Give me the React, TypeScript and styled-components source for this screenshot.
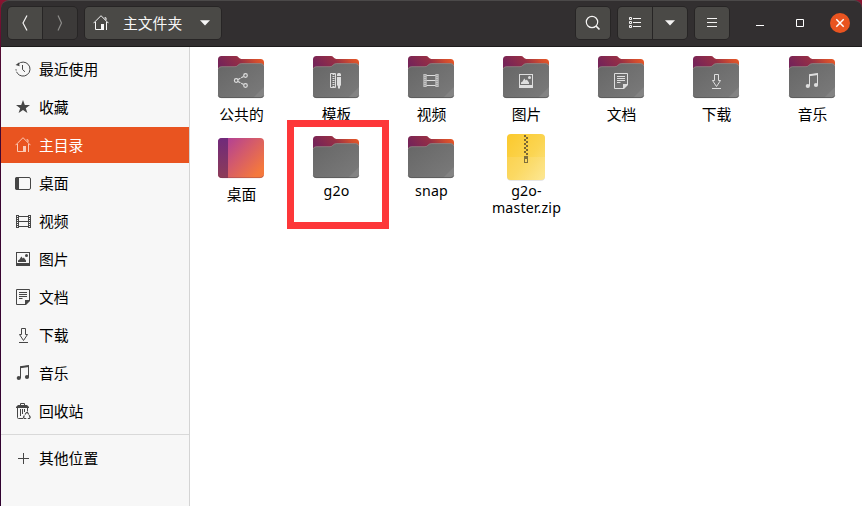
import React from 'react';
import styled, { createGlobalStyle, css } from 'styled-components';

const GlobalStyle = createGlobalStyle`
  * { box-sizing: border-box; }
  body {
    margin: 0;
    overflow: hidden;
    background: #5c1030;
    font-family: "Noto Sans", "Noto Sans CJK SC", sans-serif;
    font-size: 14.8px;
    color: #000;
  }
  svg { display: block; flex: none; }
`;

/* ---------- Window frame ---------- */

const Desktop = styled.div`
  width: 862px;
  height: 506px;
  padding-left: 1px;
  background: linear-gradient(#8a1430 0, #4d0a33 60px, #3a0430 200px, #300230 100%);
`;

const Window = styled.main`
  position: relative;
  display: flex;
  flex-direction: column;
  height: 100%;
`;

const HeaderBar = styled.header`
  display: flex;
  align-items: center;
  height: 47px;
  padding: 0 12px 1px 6px;
  border-top: 1px solid #4b4949;
  border-bottom: 1px solid #1d1b1b;
  border-radius: 8px 8px 0 0;
  background: #322f30;
  color: #fff;
`;

const ButtonGroup = styled.div<{ $gap?: number }>`
  display: flex;
  height: 34px;
  margin-right: ${(p) => p.$gap ?? 6}px;
  border: 1px solid #272525;
  border-radius: 5px;
  background: #272525;
  gap: 1px;
  overflow: hidden;
`;

const BarButton = styled.button<{ $dim?: boolean }>`
  display: flex;
  align-items: center;
  justify-content: center;
  width: 34px;
  height: 32px;
  padding: 0;
  border: 0;
  color: ${(p) => (p.$dim ? '#8d8c8a' : '#f4f3f2')};
  background: ${(p) => (p.$dim ? '#3c3a39' : '#4a4946')};
`;

const PathButton = styled.button`
  display: flex;
  align-items: center;
  width: 136px;
  height: 32px;
  padding: 0 10px 0 8px;
  border: 0;
  font: inherit;
  color: #f7f7f7;
  background: #4a4946;
`;

const PathLabel = styled.span`
  flex: 1;
  margin-left: 14px;
  text-align: left;
  line-height: 22px;
`;

const Spacer = styled.div`
  flex: 1;
`;

const WindowControls = styled.div`
  display: flex;
  align-items: center;
  gap: 20px;
`;

const Control = styled.button<{ $close?: boolean }>`
  width: 20px;
  height: 20px;
  padding: 0;
  border: 0;
  border-radius: 50%;
  color: #fff;
  background: ${(p) => (p.$close ? '#e95420' : 'transparent')};
`;

const Body = styled.div`
  display: flex;
  flex: 1;
  min-height: 0;
`;

/* ---------- Sidebar ---------- */

const Sidebar = styled.nav`
  display: flex;
  flex-direction: column;
  gap: 2px;
  width: 189px;
  padding-top: 4px;
  border-right: 1px solid #d4d4d4;
  background: #f7f7f7;
`;

const Place = styled.a<{ $active?: boolean }>`
  display: flex;
  align-items: center;
  gap: 8px;
  height: 36px;
  padding-left: 14px;
  line-height: 22px;
  color: #000;
  svg { color: #464646; }
  ${(p) =>
    p.$active &&
    css`
      color: #fff;
      background: #e95420;
      svg { color: #fbc9b5; }
    `}
`;

const Separator = styled.div`
  height: 1px;
  margin: 3px 0;
  background: #d9d9d9;
`;

/* ---------- Icon view ---------- */

const FileGrid = styled.section`
  flex: 1;
  display: grid;
  grid-template-columns: repeat(6, 95px) 97px;
  grid-auto-rows: 80px;
  align-content: start;
  padding: 6px 0 0 3.5px;
  background: #fff;
`;

const FileItem = styled.figure`
  display: flex;
  flex-direction: column;
  align-items: center;
  margin: 0;
`;

const FileName = styled.figcaption<{ $latin?: boolean }>`
  text-align: center;
  white-space: pre-line;
  margin-top: 2px;
  padding-left: 1px;
  line-height: 22px;
  ${(p) =>
    p.$latin &&
    css`
      margin-top: 1px;
      font-size: 14.2px;
      letter-spacing: 0.15px;
      line-height: 17px;
    `}
`;

const Highlight = styled.div`
  position: absolute;
  left: 286px;
  top: 120px;
  width: 102px;
  height: 109px;
  border: 7px solid #fd3739;
`;

/* ---------- Symbols on a 16px grid ---------- */

const glyphs = {
  recent: (
    <>
      <path d="M3 3.2A7 7 0 1 1 2.2 12" fill="none" stroke="currentColor" />
      <path d="M2.2 12A7 7 0 0 1 1 8" fill="none" stroke="currentColor" strokeDasharray="1.4 1.2" />
      <path d="M0.6 3.9 3.9 1.5 4.6 5.2Z" fill="currentColor" />
      <path d="M7.5 4v4.5l2.5 2.3" fill="none" stroke="currentColor" />
    </>
  ),
  star: <path d="M8 1 9.8 6H15l-4.2 3.2L12.4 14 8 11.1 3.6 14l1.6-4.8L1 6h5.2z" fill="currentColor" />,
  home: (
    <>
      <path d="M0.5 8.2 8 0.7l7.5 7.5M2.5 7v7.5h6M13.5 7v8M13 5V2.8h-1.5" fill="none" stroke="currentColor" />
      <path d="M8 9h3v6H8z" fill="currentColor" />
    </>
  ),
  desktop: (
    <>
      <rect x="0.5" y="2.5" width="15" height="12" rx="1.5" fill="none" stroke="currentColor" />
      <path d="M2 2h2v13H2Q0 15 0 13V4Q0 2 2 2z" fill="currentColor" />
    </>
  ),
  video: (
    <g fill="none" stroke="currentColor">
      <path d="M1.5 2v13M15.5 2v13" />
      <path d="M2.5 2v13M14.5 2v13" strokeDasharray="1 1" />
      <path d="M3.5 2v13M13.5 2v13M4 3.5h9M4 8.5h9M4 13.5h9" />
    </g>
  ),
  picture: (
    <>
      <path d="M1 1h14v14H1zM2 2v10h12V2z" fillRule="evenodd" fill="currentColor" />
      <path d="M3 11V9.5l1.5-1 1.8-3 1.5 2 1-1L11 9.5V11z" fill="currentColor" />
      <circle cx="11.5" cy="4.5" r="1.5" fill="currentColor" />
    </>
  ),
  document: (
    <>
      <path d="M14.5 11V0.5h-13v15H10" fill="none" stroke="currentColor" />
      <path d="M4 3.5h8M4 5.5h8M4 7.5h8M4 9.5h3.5" stroke="currentColor" />
      <path d="M10 11h5v1l-4 4h-1z" fill="currentColor" />
    </>
  ),
  download: (
    <path
      d="M6.5 1.5h4v6h2L8.5 13.5 4.5 7.5h2zM4 15.5h9"
      fill="none"
      stroke="currentColor"
    />
  ),
  music: (
    <>
      <path d="M5.5 13V2l8-1v11" fill="none" stroke="currentColor" />
      <path d="M5 1.2 14 0v2L5 3.2z" fill="currentColor" />
      <circle cx="3.8" cy="13" r="2.1" fill="currentColor" />
      <circle cx="12" cy="12" r="2.1" fill="currentColor" />
    </>
  ),
  trash: (
    <>
      <path d="M5.5 2.5V.5h4v2" fill="none" stroke="currentColor" />
      <path d="M1 5V4l2-2h9l2 2v1z" fill="currentColor" />
      <path d="M2.5 5v9.5q0 1 1 1H8M12.5 5v3.500M5.5 6v7M7.5 6v5M9.5 6v3" fill="none" stroke="currentColor" />
      <path d="M10 11.500 11.500 9.500h1l1.300 2M14.200 12.300l1 2-.8 1.200H12.800M11.300 15.500H9.300l-.8-1.200.9-1.800" fill="none" stroke="currentColor" strokeWidth="1.200" />
    </>
  ),
  plus: <path d="M3 8.5h11M8.5 3v11" stroke="currentColor" />,
  share: (
    <g fill="none" stroke="currentColor" strokeWidth="1.2">
      <circle cx="3.2" cy="7.500" r="1.8" />
      <circle cx="12.5" cy="2.500" r="1.8" />
      <circle cx="12.5" cy="12.500" r="1.8" />
      <path d="M5 6.500l2.400-1.300M8.200 4.800l2.400-1.300M5 8.500l2.400 1.300M8.200 10.200l2.400 1.300" />
    </g>
  ),
  template: (
    <>
      <path d="M2.5 0.5h5v14h-5z" fill="none" stroke="currentColor" />
      <path d="M5.5 1v13" stroke="currentColor" strokeWidth="2" strokeDasharray="1 1" />
      <path d="M9 3V1.500Q9 0 10.500 0h1Q13 0 13 1.500V3zM9 4h4v8l-1 1.500V15l-1 1-1-1v-1.500L9 12z" fill="currentColor" />
    </>
  ),
};

type GlyphName = keyof typeof glyphs;

const Glyph = ({ name }: { name: GlyphName }) => (
  <svg width="16" height="16" viewBox="0 0 16 16">
    {glyphs[name]}
  </svg>
);

const Chevron = ({ flip }: { flip?: boolean }) => (
  <svg width="16" height="16" viewBox="0 0 16 16">
    <path d={flip ? 'M6 0.5 9.5 8 6 15.5' : 'M10 0.5 6 8l4 7.5'} fill="none" stroke="currentColor" strokeWidth="1.2" />
  </svg>
);

const Caret = () => (
  <svg width="12" height="6" viewBox="0 0 12 6">
    <path d="M1 0.3h10L6 5.6z" fill="currentColor" />
  </svg>
);

/* ---------- File artwork ---------- */

const HiddenDefs = styled.svg`
  position: absolute;
`;

const Defs = () => (
  <HiddenDefs width="0" height="0">
    <defs>
      <linearGradient id="back" x1="0" x2="1" y1="0.3" y2="0">
        <stop offset="0" stopColor="#762458" />
        <stop offset="0.45" stopColor="#972f45" />
        <stop offset="0.75" stopColor="#d04c30" />
        <stop offset="1" stopColor="#ee5c22" />
      </linearGradient>
      <linearGradient id="front" x1="0" y1="0" x2="1" y2="1">
        <stop offset="0" stopColor="#666" />
        <stop offset="1" stopColor="#7b7b7b" />
      </linearGradient>
      <linearGradient id="desk" x1="0.1" y1="0" x2="1" y2="0.7">
        <stop offset="0" stopColor="#ac3c9b" />
        <stop offset="0.5" stopColor="#d35a6c" />
        <stop offset="1" stopColor="#f4783d" />
      </linearGradient>
      <linearGradient id="deskBar" x1="0" y1="0" x2="0" y2="1">
        <stop offset="0" stopColor="#702a7b" />
        <stop offset="1" stopColor="#8d3c58" />
      </linearGradient>
      <linearGradient id="zip" x1="0" y1="0" x2="1" y2="1">
        <stop offset="0" stopColor="#fbc92c" />
        <stop offset="0.55" stopColor="#fbd552" />
        <stop offset="1" stopColor="#fde588" />
      </linearGradient>
    </defs>
  </HiddenDefs>
);

const Folder = ({ emblem }: { emblem?: GlyphName }) => (
  <svg width="48" height="48" viewBox="0 0 48 48">
    <path d="M1 20V6.5Q1 3 4.5 3H19q1.5 0 2.4 1.2Q22.8 6 24.5 6H43.5Q47 6 47 9.5V20z" fill="url(#back)" />
    <path
      d="M1 17q0-3.5 3.5-3.5H18q1.5 0 2.7-1.3Q22.5 10.3 24.5 10.3H43.5Q47 10.3 47 13.8V41.5Q47 45 43.5 45H4.5Q1 45 1 41.5z"
      fill="url(#front)"
    />
    <path d="M1.2 16.2Q1.6 13.7 4.5 13.7H18q1.5 0 2.7-1.3Q22.5 10.6 24.5 10.6H43.5q2.8 0 3.3 2.4" fill="none" stroke="#a08d8b" strokeWidth=".6" />
    <path d="M47 34v7.5Q47 45 43.5 45H36z" fill="#fff" opacity=".08" />
    <path d="M1.3 42.5Q1.8 44.6 4.5 44.6H43.5q2.7 0 3.2-2.1" fill="none" stroke="#555" strokeWidth=".8" />
    {emblem && (
      <g transform={emblem === 'video' ? 'translate(15.5 19)' : 'translate(16 20)'} color="#dedede">
        {glyphs[emblem]}
      </g>
    )}
  </svg>
);

const DesktopFolder = () => (
  <svg width="48" height="48" viewBox="0 0 48 48">
    <rect x="1" y="5" width="46" height="40" rx="4" fill="url(#desk)" />
    <path d="M11 5v40H5q-4 0-4-4V9q0-4 4-4z" fill="url(#deskBar)" />
    <path d="M1.5 42.5Q2.5 44.7 5 44.7H43q2.5 0 3.5-2.2" fill="none" stroke="#6b3350" strokeOpacity=".5" strokeWidth=".7" />
  </svg>
);

const zipperRows = Array.from({ length: 10 }, (_, i) => i);

const Archive = () => (
  <svg width="48" height="48" viewBox="0 0 48 48">
    <rect x="5" y="2" width="38" height="45.8" rx="4" fill="#000" opacity=".13" />
    <rect x="5" y="1" width="38" height="46" rx="4" fill="url(#zip)" />
    <path d="M5 24h38v19q0 4-4 4H9q-4 0-4-4z" fill="#fff" opacity=".1" />
    {zipperRows.map((i) => (
      <rect key={i} x={i % 2 ? 24 : 22} y={2 + i * 2} width="2" height="2" fill="#7b6734" />
    ))}
    <path d="M22 23h4v7h-4zM23 26v3h2v-3z" fillRule="evenodd" fill="#80703d" />
  </svg>
);

/* ---------- Content ---------- */

const places: { name: string; icon: GlyphName; active?: boolean }[] = [
  { name: '最近使用', icon: 'recent' },
  { name: '收藏', icon: 'star' },
  { name: '主目录', icon: 'home', active: true },
  { name: '桌面', icon: 'desktop' },
  { name: '视频', icon: 'video' },
  { name: '图片', icon: 'picture' },
  { name: '文档', icon: 'document' },
  { name: '下载', icon: 'download' },
  { name: '音乐', icon: 'music' },
  { name: '回收站', icon: 'trash' },
];

const files: { name: string; art: React.ReactNode; latin?: boolean }[] = [
  { name: '公共的', art: <Folder emblem="share" /> },
  { name: '模板', art: <Folder emblem="template" /> },
  { name: '视频', art: <Folder emblem="video" /> },
  { name: '图片', art: <Folder emblem="picture" /> },
  { name: '文档', art: <Folder emblem="document" /> },
  { name: '下载', art: <Folder emblem="download" /> },
  { name: '音乐', art: <Folder emblem="music" /> },
  { name: '桌面', art: <DesktopFolder /> },
  { name: 'g2o', art: <Folder />, latin: true },
  { name: 'snap', art: <Folder />, latin: true },
  { name: 'g2o-\nmaster.zip', art: <Archive />, latin: true },
];

export default function App() {
  return (
    <Desktop>
      <GlobalStyle />
      <Defs />
      <Window>
        <HeaderBar>
          <ButtonGroup>
            <BarButton><Chevron /></BarButton>
            <BarButton $dim><Chevron flip /></BarButton>
          </ButtonGroup>
          <ButtonGroup>
            <PathButton>
              <Glyph name="home" />
              <PathLabel>主文件夹</PathLabel>
              <Caret />
            </PathButton>
          </ButtonGroup>
          <Spacer />
          <ButtonGroup>
            <BarButton>
              <svg width="16" height="16" viewBox="0 0 16 16">
                <circle cx="7" cy="7" r="5.7" fill="none" stroke="currentColor" strokeWidth="1.2" />
                <path d="M11 11l3.5 3.5" stroke="currentColor" strokeWidth="1.7" />
              </svg>
            </BarButton>
          </ButtonGroup>
          <ButtonGroup>
            <BarButton>
              <svg width="16" height="16" viewBox="0 0 16 16">
                <g fill="none" stroke="currentColor">
                  <path d="M2.5 2.5h2v2h-2zM2.5 6.5h2v2h-2zM2.5 10.5h2v2h-2zM6 3.5h8M6 7.5h8M6 11.5h8" />
                </g>
              </svg>
            </BarButton>
            <BarButton><Caret /></BarButton>
          </ButtonGroup>
          <ButtonGroup $gap={20}>
            <BarButton>
              <svg width="16" height="16" viewBox="0 0 16 16">
                <path d="M3 3.5h10M3 7.5h10M3 11.5h10" stroke="currentColor" />
              </svg>
            </BarButton>
          </ButtonGroup>
          <WindowControls>
            <Control>
              <svg width="20" height="20" viewBox="0 0 20 20">
                <path d="M6 12.5h8" stroke="currentColor" />
              </svg>
            </Control>
            <Control>
              <svg width="20" height="20" viewBox="0 0 20 20">
                <path d="M6.5 6.5h7v7h-7z" fill="none" stroke="currentColor" />
              </svg>
            </Control>
            <Control $close>
              <svg width="20" height="20" viewBox="0 0 20 20">
                <path d="M6.3 6.3l7.4 7.4M13.7 6.3l-7.4 7.4" stroke="currentColor" strokeWidth="1.5" />
              </svg>
            </Control>
          </WindowControls>
        </HeaderBar>
        <Body>
          <Sidebar>
            {places.map((p) => (
              <Place key={p.name} $active={p.active}>
                <Glyph name={p.icon} />
                {p.name}
              </Place>
            ))}
            <Separator />
            <Place>
              <Glyph name="plus" />
              其他位置
            </Place>
          </Sidebar>
          <FileGrid>
            {files.map((f) => (
              <FileItem key={f.name}>
                {f.art}
                <FileName $latin={f.latin}>{f.name}</FileName>
              </FileItem>
            ))}
          </FileGrid>
        </Body>
        <Highlight />
      </Window>
    </Desktop>
  );
}
